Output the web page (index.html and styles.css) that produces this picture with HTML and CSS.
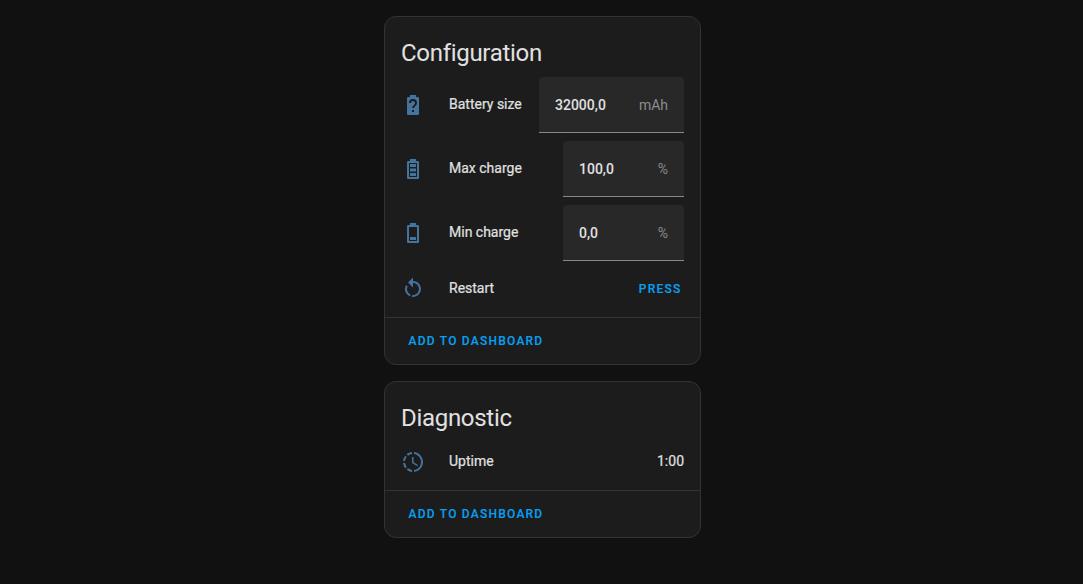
FILE: index.html
```html
<!DOCTYPE html>
<html lang="en">
<head>
<meta charset="utf-8">
<title>Device</title>
<link rel="stylesheet" href="styles.css">
</head>
<body>
<main class="column">
  <section class="card">
    <h1 class="card-header">Configuration</h1>
    <div class="rows">
      <div class="row tall">
        <svg class="icon" viewBox="0 0 24 24"><path d="M15.07,12.25L14.17,13.17C13.63,13.71 13.25,14.18 13.09,15H11.05C11.16,14.1 11.56,13.28 12.17,12.67L13.41,11.41C13.78,11.05 14,10.55 14,10C14,8.89 13.1,8 12,8A2,2 0 0,0 10,10H8A4,4 0 0,1 12,6A4,4 0 0,1 16,10C16,10.88 15.64,11.68 15.07,12.25M13,19H11V17H13M16.67,4H15V2H9V4H7.33A1.33,1.33 0 0,0 6,5.33V20.66C6,21.4 6.6,22 7.33,22H16.67C17.4,22 18,21.4 18,20.66V5.33C18,4.59 17.4,4 16.67,4Z"/></svg>
        <span class="name">Battery size</span>
        <div class="field wide"><span class="value">32000,0</span><span class="unit">mAh</span></div>
      </div>
      <div class="row tall">
        <svg class="icon" viewBox="0 0 24 24"><path d="M16 20H8V6H16M16.67 4H15V2H9V4H7.33C6.6 4 6 4.6 6 5.33V20.67C6 21.4 6.6 22 7.33 22H16.67C17.41 22 18 21.41 18 20.67V5.33C18 4.6 17.4 4 16.67 4M15 16H9V19H15V16M15 7H9V10H15V7M15 11.5H9V14.5H15V11.5Z"/></svg>
        <span class="name">Max charge</span>
        <div class="field"><span class="value">100,0</span><span class="unit">%</span></div>
      </div>
      <div class="row tall">
        <svg class="icon" viewBox="0 0 24 24"><path d="M16 20H8V6H16M16.67 4H15V2H9V4H7.33C6.6 4 6 4.6 6 5.33V20.67C6 21.4 6.6 22 7.33 22H16.67C17.41 22 18 21.41 18 20.67V5.33C18 4.6 17.4 4 16.67 4M15 16H9V19H15V16Z"/></svg>
        <span class="name">Min charge</span>
        <div class="field"><span class="value">0,0</span><span class="unit">%</span></div>
      </div>
      <div class="row">
        <svg class="icon" viewBox="0 0 24 24"><path d="M12,4C14.1,4 16.1,4.8 17.6,6.3C20.7,9.4 20.7,14.5 17.6,17.6C15.8,19.5 13.3,20.2 10.9,19.9L11.4,17.9C13.1,18.1 14.9,17.5 16.2,16.2C18.5,13.9 18.5,10.1 16.2,7.7C15.1,6.6 13.5,6 12,6V10.6L7,5.6L12,0.6V4M6.3,17.6C3.7,15 3.3,11 5.1,7.9L6.6,9.4C5.5,11.6 5.9,14.4 7.8,16.2C8.3,16.7 8.9,17.1 9.6,17.4L9,19.4C8,19 7.1,18.4 6.3,17.6Z"/></svg>
        <span class="name">Restart</span>
        <button class="button press">PRESS</button>
      </div>
    </div>
    <div class="card-actions"><button class="button">ADD TO DASHBOARD</button></div>
  </section>
  <section class="card">
    <h1 class="card-header">Diagnostic</h1>
    <div class="rows">
      <div class="row">
        <svg class="icon" viewBox="0 0 24 24"><path d="M13,2.03V2.05L13,4.05C17.39,4.59 20.5,8.58 19.96,12.97C19.5,16.61 16.64,19.5 13,19.93V21.93C18.5,21.38 22.5,16.5 21.95,11C21.5,6.25 17.73,2.5 13,2.03M11,2.06C9.05,2.25 7.19,3 5.67,4.26L7.1,5.74C8.22,4.84 9.57,4.26 11,4.06V2.06M4.26,5.67C3,7.19 2.25,9.04 2.05,11H4.05C4.24,9.58 4.8,8.23 5.69,7.1L4.26,5.67M2.06,13C2.26,14.96 3.03,16.81 4.27,18.33L5.69,16.9C4.81,15.77 4.24,14.42 4.06,13H2.06M7.1,18.37L5.67,19.74C7.18,21 9.04,21.79 11,22V20C9.58,19.82 8.23,19.25 7.1,18.37M12.5,7V12.25L17,14.92L16.25,16.15L11,13V7H12.5Z"/></svg>
        <span class="name">Uptime</span>
        <span class="state">1:00</span>
      </div>
    </div>
    <div class="card-actions"><button class="button">ADD TO DASHBOARD</button></div>
  </section>
</main>
</body>
</html>
```
FILE: styles.css
```css
* {
  box-sizing: border-box;
}

body {
  margin: 0;
  min-height: 584px;
  background: #111111;
  color: #e1e1e1;
  font-family: Roboto, "Liberation Sans", sans-serif;
  font-size: 14px;
  line-height: 20px;
}

.column {
  display: flex;
  flex-direction: column;
  gap: 16px;
  width: 317px;
  margin-left: 384px;
  padding-top: 16px;
}

.card {
  background: #1c1c1c;
  border: 1px solid #333333;
  border-radius: 12px;
}

.card-header {
  margin: 0;
  padding: 12px 16px 0;
  font-size: 24px;
  font-weight: 400;
  line-height: 48px;
  letter-spacing: -0.3px;
}

.rows {
  display: flex;
  flex-direction: column;
  gap: 8px;
  padding: 0 16px 8px;
}

.row {
  display: flex;
  align-items: center;
  height: 40px;
}

.tall {
  height: 56px;
}

.icon {
  flex: none;
  width: 24px;
  height: 24px;
  margin-right: 24px;
  fill: #44739e;
}

.name {
  flex: 1;
  padding-bottom: 2px;
  -webkit-text-stroke: 0.2px #e1e1e1;
}

.state {
  padding-bottom: 2px;
  -webkit-text-stroke: 0.2px #e1e1e1;
}

.field {
  display: flex;
  align-items: center;
  justify-content: space-between;
  width: 121px;
  height: 56px;
  padding: 1px 16px 0;
  background: #282828;
  border-bottom: 1px solid #888888;
  border-radius: 4px 4px 0 0;
}

.wide {
  width: 145px;
}

.value {
  font-weight: 500;
}

.unit {
  color: #8c8c8c;
}

.button {
  padding: 0 7.5px;
  border: 0;
  background: none;
  color: #08a0f0;
  font: 500 12px/36px Roboto, "Liberation Sans", sans-serif;
  letter-spacing: 1.23px;
  -webkit-text-stroke: 0.15px #08a0f0;
}

.press {
  padding: 0 2.5px 0 0;
}

.card-actions {
  display: flex;
  padding: 5px 16px;
  border-top: 1px solid #333333;
}
```
